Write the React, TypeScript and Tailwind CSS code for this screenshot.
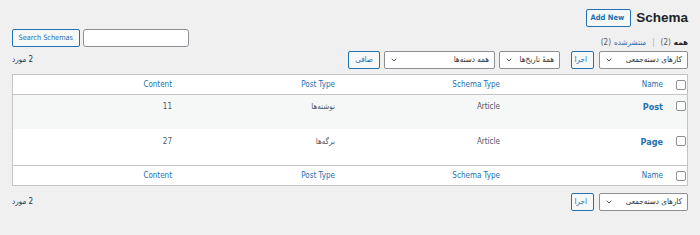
import { ChevronDown } from 'lucide-react'

function Select({ label, width }: { label: string; width: string }) {
  return (
    <div className={`flex items-center justify-between h-[18px] ${width} bg-white border border-[#8c8f94] rounded-[2px] px-[5px] text-[#2c3338] whitespace-nowrap`}>
      <span>{label}</span>
      <ChevronDown size={8} strokeWidth={2.5} className="text-[#2c3338]" />
    </div>
  )
}

function Btn({ children, className = '' }: { children: React.ReactNode; className?: string }) {
  return (
    <button className={`h-[18px] border border-[#2271b1] rounded-[2px] bg-[#f6f7f7] text-[#2271b1] px-[6px] leading-none whitespace-nowrap ${className}`}>
      {children}
    </button>
  )
}

function CheckBox() {
  return <span className="block w-[10px] h-[10px] bg-white border border-[#8c8f94] rounded-[2px]"></span>
}

function Row({ cells, className, head }: { cells: string[]; className: string; head?: boolean }) {
  const text = head ? 'text-[#2271b1]' : 'text-[#50575e]'
  return (
    <div className={`flex ${className}`}>
      <div className="w-[16px] pr-[1px] flex">
        <CheckBox />
      </div>
      <div className={`w-[163px] pr-2 ${head ? 'text-[#2271b1]' : 'text-[#2271b1] font-bold text-[9px]'}`}>{cells[0]}</div>
      <div className={`w-[165px] pr-2 ${text}`}>{cells[1]}</div>
      <div className={`w-[163px] pr-2 ${text}`}>{cells[2]}</div>
      <div className={`w-[167px] pr-2 ${text}`}>{cells[3]}</div>
    </div>
  )
}

export default function App() {
  return (
    <div
      dir="rtl"
      className="w-[700px] h-[235px] bg-[#f0f0f1] px-3 pt-[10px] text-[8px] text-[#2c3338] overflow-hidden"
      style={{ fontFamily: '"DejaVu Sans Condensed", "DejaVu Sans", sans-serif' }}
    >
      <div className="flex items-center gap-[5px] h-[15px]">
        <h1 className="text-[13.5px] font-bold text-[#1d2327] leading-none" style={{ fontFamily: '"Liberation Sans", sans-serif' }}>Schema</h1>
        <Btn className="h-[15px] w-[45px] px-0 font-bold text-[7.5px]">Add New</Btn>
      </div>

      <div className="flex justify-between items-start mt-[4px] h-[18px]">
        <div className="mt-[8px] flex items-center gap-[3px] text-[#50575e]">
          <span className="font-bold text-[#1d2327]">همه</span>
          <span>(2)</span>
          <span className="px-[3px] text-[#a7aaad]">|</span>
          <span className="text-[#2271b1]">منتشرشده</span>
          <span>(2)</span>
        </div>
        <div className="flex items-center gap-[3px]">
          <div className="w-[106px] h-[18px] bg-white border border-[#8c8f94] rounded-[3px]"></div>
          <Btn className="w-[68px] px-0 text-[7.3px]">Search Schemas</Btn>
        </div>
      </div>

      <div className="flex items-center mt-[4px] h-[18px]">
        <Select label="کارهای دسته‌جمعی" width="w-[89px]" />
        <Btn className="w-[23px] px-0 mr-[5px]">اجرا</Btn>
        <div className="mr-[11px]">
          <Select label="همهٔ تاریخ‌ها" width="w-[61px]" />
        </div>
        <div className="mr-[4px]">
          <Select label="همه دسته‌ها" width="w-[111px]" />
        </div>
        <Btn className="w-[32px] px-0 mr-[4px]">صافی</Btn>
        <span className="ms-auto text-[#2c3338]">2 مورد</span>
      </div>

      <div className="mt-[5px] border border-[#c3c4c7] bg-white">
        <Row head cells={['Name', 'Schema Type', 'Post Type', 'Content']} className="h-[20px] items-center border-b border-[#c3c4c7]" />
        <Row cells={['Post', 'Article', 'نوشته‌ها', '11']} className="h-[34px] pt-[6px] bg-[#f6f7f7]" />
        <Row cells={['Page', 'Article', 'برگه‌ها', '27']} className="h-[36px] pt-[7px]" />
        <Row head cells={['Name', 'Schema Type', 'Post Type', 'Content']} className="h-[20px] items-center border-t border-[#c3c4c7]" />
      </div>

      <div className="flex items-center mt-[7px] h-[18px]">
        <Select label="کارهای دسته‌جمعی" width="w-[89px]" />
        <Btn className="w-[23px] px-0 mr-[5px]">اجرا</Btn>
        <span className="ms-auto text-[#2c3338]">2 مورد</span>
      </div>
    </div>
  )
}
